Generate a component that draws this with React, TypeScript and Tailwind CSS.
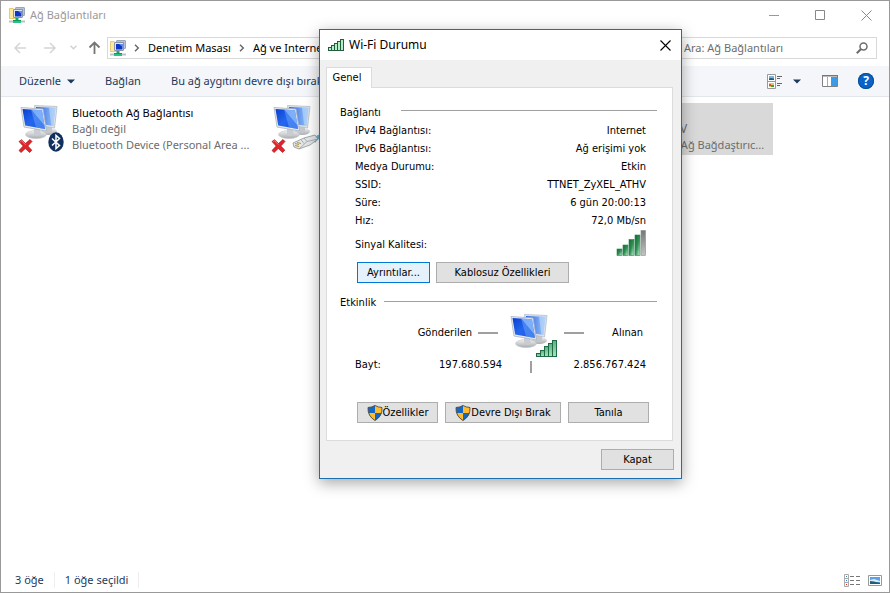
import { useState } from 'react';

const connectionRows = [
  { label: 'IPv4 Bağlantısı:', value: 'Internet' },
  { label: 'IPv6 Bağlantısı:', value: 'Ağ erişimi yok' },
  { label: 'Medya Durumu:', value: 'Etkin' },
  { label: 'SSID:', value: 'TTNET_ZyXEL_ATHV' },
  { label: 'Süre:', value: '6 gün 20:00:13' },
  { label: 'Hız:', value: '72,0 Mb/sn' },
];

const adapters = [
  {
    id: 'bluetooth',
    name: 'Bluetooth Ağ Bağlantısı',
    status: 'Bağlı değil',
    device: 'Bluetooth Device (Personal Area ...',
    offline: true,
  },
  {
    id: 'ethernet',
    name: 'Ethernet',
    status: 'Kablo yok',
    device: 'Realtek PCIe',
    offline: true,
  },
  {
    id: 'wifi',
    name: 'Wi-Fi',
    status: 'TTNET_ZyXEL_ATHV',
    device: 'Qualcomm Atheros Ağ Bağdaştırıc...',
    offline: false,
  },
];

function NetworkFolderIcon() {
  return (
    <svg width="16" height="16" viewBox="0 0 16 16" className="shrink-0">
      <path d="M0 1h4l1 1h3v10H0z" fill="#f0d873" />
      <path d="M0 1h4l1 1v10H0z" fill="#fbe9a0" />
      <path d="M.5 1.500h3.500l1 1v9H.5z" fill="none" stroke="#d9b95a" strokeWidth=".6" />
      <rect x="6.500" y=".5" width="9" height="8" rx=".5" fill="#b7c3d2" stroke="#9aa7b8" />
      <rect x="8" y="2" width="6" height="5" fill="#6f9fe4" />
      <rect x="4.500" y="2.500" width="9" height="8" rx=".5" fill="#dfe5ee" stroke="#8794ab" />
      <rect x="6" y="4" width="6.500" height="5.500" fill="#1034c4" />
      <path d="M9 4h3.500v3z" fill="#5d8df0" />
      <path d="M6.500 11h3v2.500h-3z" fill="#16a868" />
      <path d="M0 13.500h16v2H0z" fill="#b9c2c6" />
      <path d="M4 13h8v3H4z" fill="#2cc083" />
      <path d="M4 13h8v1H4z" fill="#0f9a5c" />
    </svg>
  );
}

// Two overlapping monitors, shared by the adapter list and the status dialog
function ComputersIcon({ id, className }: { id: string; className?: string }) {
  return (
    <svg width="38" height="34" viewBox="0 0 38 34" className={className}>
      <defs>
        <linearGradient id={`${id}-screen`} x1="0" y1="0" x2="1" y2="1">
          <stop offset="0" stopColor="#0b3fd0" />
          <stop offset=".5" stopColor="#2467ee" />
          <stop offset="1" stopColor="#1a55e0" />
        </linearGradient>
        <linearGradient id={`${id}-back`} x1="0" y1="0" x2="1" y2="0">
          <stop offset="0" stopColor="#2a63e4" />
          <stop offset="1" stopColor="#9cc6f8" />
        </linearGradient>
        <linearGradient id={`${id}-base`} x1="0" y1="0" x2="0" y2="1">
          <stop offset="0" stopColor="#f2f2f2" />
          <stop offset="1" stopColor="#a9adb1" />
        </linearGradient>
      </defs>
      <ellipse cx="29" cy="26.500" rx="8" ry="3.500" fill={`url(#${id}-base)`} />
      <path d="M26 21l6 1v5h-6z" fill="#c4c8cc" />
      <path d="M14.500.5L37 1.500 34.500 23 17 20z" fill="#dfe4ea" stroke="#b4bcc6" strokeWidth=".8" />
      <path d="M16 2L35.500 2.800 33.300 21 18 18.500z" fill={`url(#${id}-back)`} />
      <path d="M29 2.500l6.500.3L33.300 21l-2-.3z" fill="#c0defc" opacity=".6" />
      <ellipse cx="16" cy="29.500" rx="10.500" ry="4" fill={`url(#${id}-base)`} stroke="#b8bcc0" strokeWidth=".5" />
      <path d="M14 23l6 1 1 6q-4 1.500-7 0z" fill="#c9cdd1" />
      <path d="M1 2.500L23 4l3.500 22L4 22z" fill="#e7ebef" stroke="#a9b2bd" strokeWidth=".8" />
      <path d="M2.500 4L22 5.300l3 18.700L5.200 20.500z" fill={`url(#${id}-screen)`} />
      <path d="M11 4.600l11 .7 2.500 15.500z" fill="#9cc8fd" opacity=".75" />
      <path d="M11 4.600l13.500 16.200.5 3.200-9-1.600z" fill="#5f9bf8" opacity=".6" />
    </svg>
  );
}

function RedCross() {
  return (
    <svg width="15" height="14" viewBox="0 0 15 14" className="absolute left-1 top-[34px]">
      <path d="M1 2.500L3.500.7 7.500 4.600 12 .5l2 2L9.800 7l4 4.200-2.200 2.300-4.300-4-4.200 4L1 11.500 5.200 7z" fill="#e0252b" stroke="#a81218" strokeWidth=".7" />
      <path d="M2.300 2.500l1.200-.8 4 4" fill="none" stroke="#f58a8a" strokeWidth=".9" />
    </svg>
  );
}

function AdapterIcon({ id, offline }: { id: string; offline: boolean }) {
  return (
    <div className="relative h-12 w-[58px] shrink-0">
      <ComputersIcon id={id} className="absolute left-1.5 top-0" />
      {offline && <RedCross />}
      {id === 'bluetooth' && (
        <svg width="16" height="20" viewBox="0 0 16 20" className="absolute left-[34px] top-[27px]">
          <ellipse cx="8" cy="10" rx="7.700" ry="9.700" fill="#12305f" />
          <path d="M4 6.500l7.500 7L8 16.500v-13l3.500 3L4 13.500" fill="none" stroke="#fff" strokeWidth="1.500" />
        </svg>
      )}
      {id === 'ethernet' && (
        <svg width="34" height="20" viewBox="0 0 34 20" className="absolute left-[25px] top-[27px]">
          <path d="M21 7Q26 1 34 2v4q-7-1-11 5z" fill="#6fb5dc" />
          <path d="M1 11L12 6l11-3 3 4-8 6-11 4-5-2z" fill="#e3e5e6" stroke="#8d9499" strokeWidth=".8" />
          <path d="M12 6l3 3.500L26 7M15 9.500L7 17M9 7.500l3 4" fill="none" stroke="#9aa1a6" strokeWidth=".8" />
          <path d="M3 11.500l4 1M3 13.500l4 1M5 10.500l4 1" stroke="#a98f3c" strokeWidth=".9" />
        </svg>
      )}
    </div>
  );
}

function SignalBars({ className }: { className?: string }) {
  return (
    <svg viewBox="0 0 21 17" width="21" height="17" className={className}>
      <defs>
        <linearGradient id="activity-bars" x1="0" y1="0" x2="0" y2="1">
          <stop offset="0" stopColor="#5fae84" />
          <stop offset="1" stopColor="#a6e6bf" />
        </linearGradient>
      </defs>
      <g fill="url(#activity-bars)" stroke="#1f6b43" strokeWidth="1">
        <rect x=".5" y="13.500" width="4" height="3" />
        <rect x="4.500" y="10.500" width="4" height="6" />
        <rect x="8.500" y="6.500" width="4" height="10" />
        <rect x="12.500" y="3.500" width="4" height="13" />
        <rect x="16.500" y=".5" width="4" height="16" />
      </g>
    </svg>
  );
}

function SmallSignal() {
  return (
    <svg viewBox="0 0 16 12" width="16" height="12" className="shrink-0">
      <g fill="#b4f0c4" stroke="#245c40">
        <rect x=".5" y="8.500" width="3" height="3" />
        <rect x="3.500" y="6.500" width="3" height="5" />
        <rect x="6.500" y="4.500" width="3" height="7" />
        <rect x="9.500" y="2.500" width="3" height="9" />
        <rect x="12.500" y=".5" width="3" height="11" />
      </g>
    </svg>
  );
}

function QualityMeter() {
  return (
    <svg viewBox="0 0 30 26" width="30" height="26">
      <defs>
        <linearGradient id="meter-on" x1="0" y1="0" x2="1" y2="1">
          <stop offset="0" stopColor="#0d6a30" />
          <stop offset=".5" stopColor="#2f8f55" />
          <stop offset="1" stopColor="#c9f2d8" />
        </linearGradient>
        <linearGradient id="meter-off" x1="0" y1="0" x2="0" y2="1">
          <stop offset="0" stopColor="#767676" />
          <stop offset="1" stopColor="#c4c4c4" />
        </linearGradient>
      </defs>
      <g fill="url(#meter-on)" stroke="#2c8452" strokeWidth=".6">
        <rect x="1" y="19" width="5" height="6.500" />
        <rect x="7" y="15" width="5" height="10.500" />
        <rect x="13" y="9.500" width="5" height="16" />
        <rect x="19" y="5" width="5" height="20.500" />
      </g>
      <rect x="25" y=".5" width="4.500" height="25" fill="url(#meter-off)" stroke="#8c8c8c" strokeWidth=".6" />
    </svg>
  );
}

function ShieldIcon() {
  return (
    <svg width="16" height="16" viewBox="0 0 16 16" className="shrink-0">
      <path d="M8 .5Q5 2.300 1 2.500 .5 11 8 15.500z" fill="#1368c4" />
      <path d="M8 .5q3 1.800 7 2Q15.500 11 8 15.500z" fill="#fdbb2f" />
      <path d="M1.300 8H8v7.500Q3 12.500 1.300 8z" fill="#fdbb2f" />
      <path d="M14.700 8H8v7.500Q13 12.500 14.700 8z" fill="#1368c4" />
      <path d="M8 .5Q5 2.300 1 2.500 .5 11 8 15.500 15.500 11 15 2.500 11 2.300 8 .5z" fill="none" stroke="#4d4a3d" strokeWidth=".9" />
    </svg>
  );
}

function Crumb({ children }: { children: string }) {
  return (
    <>
      <svg width="6" height="8" viewBox="0 0 6 8" className="shrink-0">
        <path d="M1 .7L4.300 4 1 7.300" fill="none" stroke="#666" strokeWidth="1.400" />
      </svg>
      <a href="#" className="whitespace-nowrap text-black">{children}</a>
    </>
  );
}

function TitleBar() {
  return (
    <header className="flex h-7 items-center pl-2">
      <NetworkFolderIcon />
      <h1 className="ml-[5px] grow text-[#999]">Ağ Bağlantıları</h1>
      <button aria-label="Simge durumuna küçült" className="flex h-7 w-[46px] items-center justify-center">
        <svg width="11" height="11" viewBox="0 0 11 11"><path d="M0 5.500h10" stroke="#999" /></svg>
      </button>
      <button aria-label="Ekranı kapla" className="flex h-7 w-[46px] items-center justify-center">
        <svg width="11" height="11" viewBox="0 0 11 11"><path d="M.5.5h9v9h-9z" fill="none" stroke="#888" /></svg>
      </button>
      <button aria-label="Pencereyi kapat" className="flex h-7 w-[46px] items-center justify-center">
        <svg width="11" height="11" viewBox="0 0 11 11"><path d="M.5.5l10 10m0-10l-10 10" stroke="#888" /></svg>
      </button>
    </header>
  );
}

function AddressBar() {
  return (
    <nav className="flex h-[37px] items-center pl-3 pr-3">
      <button aria-label="Geri" className="w-[30px]">
        <svg width="14" height="12" viewBox="0 0 14 12"><path d="M7 1L2 6l5 5M2 6h11" fill="none" stroke="#d5d5d5" strokeWidth="1.500" /></svg>
      </button>
      <button aria-label="İleri" className="w-[27px]">
        <svg width="14" height="12" viewBox="0 0 14 12"><path d="M7 1l5 5-5 5M12 6H1" fill="none" stroke="#d5d5d5" strokeWidth="1.500" /></svg>
      </button>
      <button aria-label="Son konumlar" className="w-[18px]">
        <svg width="7" height="5" viewBox="0 0 7 5"><path d="M.5.8l3 3 3-3" fill="none" stroke="#d0d0d0" strokeWidth="1.300" /></svg>
      </button>
      <button aria-label="Yukarı" className="w-[19px]">
        <svg width="13" height="14" viewBox="0 0 13 14"><path d="M1.500 6.500l5-5 5 5M6.500 2v11" fill="none" stroke="#757575" strokeWidth="1.800" /></svg>
      </button>
      <div className="flex h-[22px] min-w-0 grow items-center gap-2 overflow-hidden border border-[#d9d9d9] pl-0.5">
        <NetworkFolderIcon />
        <Crumb>Denetim Masası</Crumb>
        <Crumb>Ağ ve Internet</Crumb>
        <Crumb>Ağ Bağlantıları</Crumb>
      </div>
      <label className="ml-2 flex h-[22px] w-[200px] items-center border border-[#d9d9d9] pl-1.5 pr-2">
        <input
          type="search"
          aria-label="Ara"
          placeholder="Ara: Ağ Bağlantıları"
          className="min-w-0 grow bg-transparent outline-none placeholder:text-[#6d6d6d]"
        />
        <svg width="12" height="12" viewBox="0 0 12 12" className="shrink-0">
          <circle cx="7.500" cy="4.500" r="3.500" fill="none" stroke="#6d6d6d" strokeWidth="1.500" />
          <path d="M5 7L.8 11.200" stroke="#6d6d6d" strokeWidth="2" />
        </svg>
      </label>
    </nav>
  );
}

function CommandBar() {
  return (
    <div className="flex h-[31px] items-center border-b border-[#e3e6ea] bg-[#f4f6f9] pl-[18px] pr-[15px] text-[#1e395b]">
      <button className="flex w-[86px] items-center gap-1.5">
        Düzenle
        <svg width="8" height="5" viewBox="0 0 8 5"><path d="M0 .5h8l-4 4z" fill="#1e395b" /></svg>
      </button>
      <button className="w-[66px] text-left">Bağlan</button>
      <button className="grow whitespace-nowrap text-left">Bu ağ aygıtını devre dışı bırak</button>
      <button aria-label="Görünüm" className="flex items-center gap-2.5">
        <svg width="16" height="15" viewBox="0 0 16 15">
          <path d="M.5.5h8v14h-8zM.5 7.500h8" fill="#fff" stroke="#999" />
          <path d="M2 2h5v4H2z" fill="#7db4e6" />
          <path d="M2 4.500L4 4l3 .5V6H2z" fill="#245c78" />
          <path d="M2 9h5v4H2z" fill="#d3cf6b" />
          <path d="M2 10h2v2H2z" fill="#d4572f" />
          <path d="M4 11h3v2H4z" fill="#4a9a3c" />
          <path d="M10 2.500h5M10 4.500h3M10 9.500h5M10 11.500h3" stroke="#666" />
        </svg>
        <svg width="8" height="5" viewBox="0 0 8 5"><path d="M0 .5h8l-4 4z" fill="#1e395b" /></svg>
      </button>
      <button aria-label="Önizleme bölmesi" className="ml-[21px]">
        <svg width="16" height="12" viewBox="0 0 16 12">
          <path d="M.5.5h15v11H.5z" fill="#fff" stroke="#808080" />
          <path d="M0 .5h16" stroke="#777" strokeWidth="2" />
          <path d="M5.500 2v9" stroke="#aaa" />
          <path d="M9 2h6v9H9z" fill="#3c9be8" />
        </svg>
      </button>
      <button aria-label="Yardım" className="ml-5 flex size-4 items-center justify-center rounded-full bg-[#0a64c8] text-[12px] font-bold text-white ring-1 ring-inset ring-[#0b4d94]">
        ?
      </button>
    </div>
  );
}

function StatusBar() {
  return (
    <footer className="flex h-6 items-center pl-3.5 pr-[7px] text-[#1e395b]">
      <span className="border-r border-[#eee] pr-2.5">3 öğe</span>
      <span className="border-r border-[#eee] px-2.5">1 öğe seçildi</span>
      <button aria-label="Ayrıntılar görünümü" className="ml-auto mr-2">
        <svg width="16" height="13" viewBox="0 0 16 13">
          <path d="M.5.5h4v12h-4zM.5 4.500h4M.5 8.500h4" fill="#fff" stroke="#aaa" />
          <path d="M2 2h1v1H2z" fill="#3a7a9a" />
          <path d="M2 6h1v1H2z" fill="#2f6fd0" />
          <path d="M2 10h1v1H2z" fill="#d02020" />
          <path d="M6 2.500h4m2 0h4M6 6.500h4m2 0h4M6 10.500h4m2 0h4" stroke="#777" />
        </svg>
      </button>
      <button aria-label="Büyük simgeler">
        <svg width="14" height="11" viewBox="0 0 14 11">
          <path d="M.5.5h13v10H.5z" fill="#fff" stroke="#999" />
          <path d="M2 2h10v7H2z" fill="#5ba0ea" />
          <path d="M2 5l4-1 6 2v1H2z" fill="#dcecf6" />
          <path d="M2 6l4 .5L12 8v1H2z" fill="#1d5f74" />
        </svg>
      </button>
    </footer>
  );
}

interface DialogButtonProps {
  children: React.ReactNode;
  className: string;
  onClick?: () => void;
}

function DialogButton({ children, className, onClick }: DialogButtonProps) {
  return (
    <button
      onClick={onClick}
      className={`flex h-[21px] items-center justify-center whitespace-nowrap border ${className}`}
    >
      {children}
    </button>
  );
}

function StatusDialog({ onClose }: { onClose: () => void }) {
  return (
    <section
      role="dialog"
      aria-label="Wi-Fi Durumu"
      className="absolute left-[318px] top-7 w-[363px] border border-[#1a6fb0] bg-[#f0f0f0] font-['DejaVu_Sans_Condensed','Noto_Sans',sans-serif] text-[11px] text-black shadow-[0_4px_14px_rgba(0,0,0,0.35)]"
    >
      <div className="flex h-[30px] items-center bg-white pl-2 pr-2.5">
        <SmallSignal />
        <h2 className="ml-[5px] grow font-['Noto_Sans',sans-serif] text-[12px]">Wi-Fi Durumu</h2>
        <button aria-label="Kapat">
          <svg width="11" height="11" viewBox="0 0 11 11"><path d="M.5.5l10 10m0-10l-10 10" stroke="#000" strokeWidth="1.100" /></svg>
        </button>
      </div>

      <div className="px-1.5 pt-[7px]">
        <button role="tab" aria-selected="true" className="relative z-10 -mb-px block h-[21px] w-[46px] border border-b-0 border-[#dcdcdc] bg-white pr-1">
          Genel
        </button>
        <div className="mr-0.5 border border-[#dcdcdc] bg-white pb-[17px] pl-[13px] pr-[15px] pt-[15px]">
          <div className="flex h-[19px] items-center gap-5">
            <h3>Bağlantı</h3>
            <div className="mb-1 h-px grow bg-[#a0a0a0]" />
          </div>
          <dl className="pl-[15px] pr-[11px]">
            {connectionRows.map((row) => (
              <div key={row.label} className="flex h-[18px] items-center justify-between">
                <dt>{row.label}</dt>
                <dd>{row.value}</dd>
              </div>
            ))}
            <div className="flex h-[30px] items-center justify-between">
              <dt>Sinyal Kalitesi:</dt>
              <dd className="self-start"><QualityMeter /></dd>
            </div>
          </dl>
          <div className="mt-0.5 flex gap-1.5 pl-[17px]">
            <DialogButton className="w-[73px] border-[#0078d7] bg-[#e5f1fb]">Ayrıntılar...</DialogButton>
            <DialogButton className="w-[133px] border-[#adadad] bg-[#e1e1e1]">Kablosuz Özellikleri</DialogButton>
          </div>

          <div className="mt-[11px] flex h-[18px] items-center gap-2">
            <h3>Etkinlik</h3>
            <div className="mb-1 h-px grow bg-[#a0a0a0]" />
          </div>
          <div className="flex h-[42px] items-center pl-[15px] pr-3.5">
            <span className="grow text-right">Gönderilen</span>
            <div className="ml-1.5 h-0.5 w-5 bg-[#a0a0a0]" />
            <div className="relative mx-3 h-[42px] w-[42px] pt-0.5">
              <ComputersIcon id="activity" />
              <SignalBars className="absolute left-[26px] top-7" />
            </div>
            <div className="h-0.5 w-5 bg-[#a0a0a0]" />
            <span className="w-[59px] text-right">Alınan</span>
          </div>
          <div className="mt-0.5 flex h-[18px] items-center pl-[15px] pr-[11px]">
            <span className="w-[60px]">Bayt:</span>
            <span className="grow text-right">197.680.594</span>
            <div className="ml-7 mt-1 h-3 w-0.5 bg-[#a0a0a0]" />
            <span className="w-[114px] text-right">2.856.767.424</span>
          </div>
          <div className="mt-7 flex gap-[7px] pl-[17px]">
            <DialogButton className="w-[81px] border-[#adadad] bg-[#e1e1e1]"><ShieldIcon />Özellikler</DialogButton>
            <DialogButton className="w-[116px] border-[#adadad] bg-[#e1e1e1]"><ShieldIcon />Devre Dışı Bırak</DialogButton>
            <DialogButton className="w-[81px] border-[#adadad] bg-[#e1e1e1]">Tanıla</DialogButton>
          </div>
        </div>
      </div>

      <div className="flex justify-end px-[7px] py-2">
        <DialogButton onClick={onClose} className="w-[73px] border-[#adadad] bg-[#e1e1e1]">Kapat</DialogButton>
      </div>
    </section>
  );
}

export default function App() {
  const [dialogOpen, setDialogOpen] = useState(true);

  return (
    <div className="relative flex min-h-screen flex-col border border-[#999] bg-white font-['Noto_Sans',sans-serif] text-[11px] leading-4">
      <TitleBar />
      <AddressBar />
      <CommandBar />

      <main className="grow pl-[13px] pt-1.5">
        <ul className="flex">
          {adapters.map((adapter) => (
            <li
              key={adapter.id}
              className={`flex w-[253px] pb-0.5 pt-0.5 ${adapter.id === 'wifi' ? 'bg-[#d9d9d9]' : ''}`}
            >
              <AdapterIcon id={adapter.id} offline={adapter.offline} />
              <div className="min-w-0">
                <p className="truncate text-black">{adapter.name}</p>
                <p className={`truncate text-[#6d6d6d] ${adapter.id === 'wifi' ? 'text-[12px]' : ''}`}>
                  {adapter.status}
                </p>
                <p className="truncate text-[#6d6d6d]">{adapter.device}</p>
              </div>
            </li>
          ))}
        </ul>
      </main>

      <StatusBar />
      {dialogOpen && <StatusDialog onClose={() => setDialogOpen(false)} />}
    </div>
  );
}
